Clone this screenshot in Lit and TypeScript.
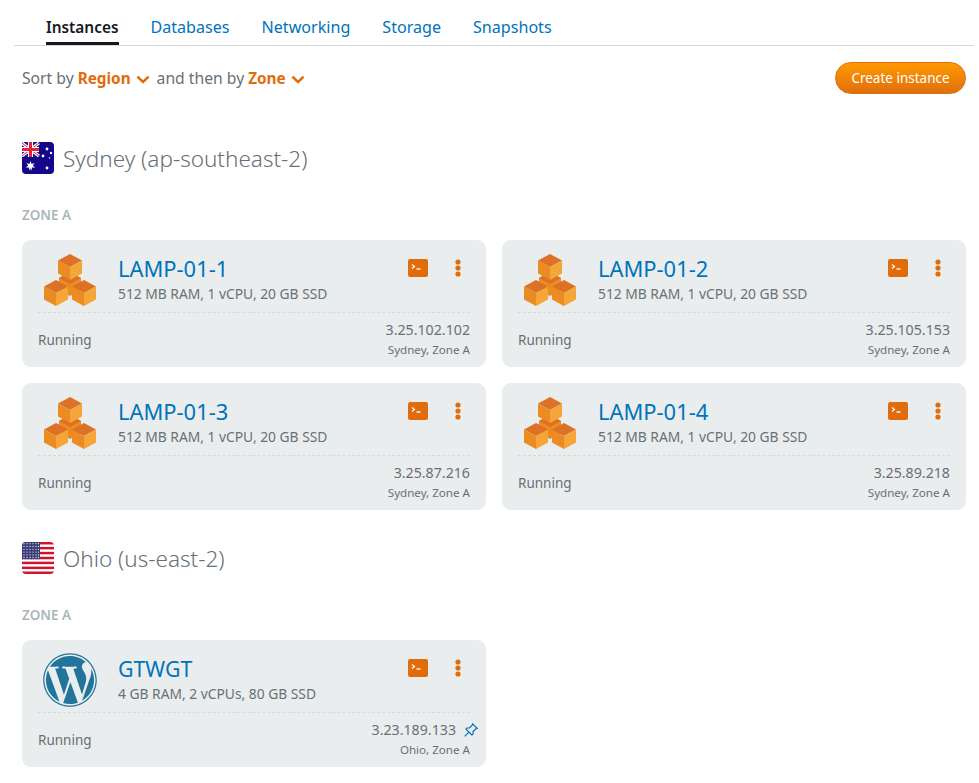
import { LitElement, html, css, svg } from 'lit';
import { customElement } from 'lit/decorators.js';

const cube = (x: number, y: number) => svg`
  <g transform="translate(${x} ${y})">
    <polygon points="12,0 24,6.5 12,13 0,6.5" fill="#dd7226" />
    <polygon points="0,6.5 12,13 12,26 0,19.5" fill="#ea8c22" />
    <polygon points="24,6.5 12,13 12,26 24,19.5" fill="#f4a63a" />
  </g>
`;

const lampIcon = html`<svg class="logo" viewBox="0 -1 54 54">
  <polygon points="16,24 27,18 38,24 38,36 27,42 16,36" fill="#ea8c22" />
  <polygon points="16,24 27,18 38,24 27,30" fill="#dd7226" />
  ${cube(15, 0)}${cube(1, 26)}${cube(29, 26)}
</svg>`;

const wordpressIcon = html`<svg class="logo" viewBox="-0.1 -0.1 24.2 24.2">
  <path
    fill="#21759b"
    d="M21.469 6.825c.84 1.537 1.318 3.3 1.318 5.175 0 3.979-2.156 7.456-5.363 9.325l3.295-9.527c.615-1.54.82-2.771.82-3.864 0-.405-.026-.78-.07-1.11m-7.981.105c.647-.03 1.232-.105 1.232-.105.582-.075.514-.93-.067-.899 0 0-1.755.135-2.88.135-1.064 0-2.85-.15-2.85-.15-.585-.03-.661.855-.075.885 0 0 .54.061 1.125.09l1.68 4.605-2.37 7.08L5.354 6.9c.649-.03 1.234-.1 1.234-.1.585-.075.516-.93-.065-.896 0 0-1.746.138-2.874.138-.2 0-.438-.008-.69-.015C4.911 3.15 8.235 1.215 12 1.215c2.809 0 5.365 1.072 7.286 2.833-.046-.003-.091-.009-.141-.009-1.06 0-1.812.923-1.812 1.914 0 .89.513 1.643 1.06 2.531.411.72.89 1.643.89 2.977 0 .915-.354 1.994-.821 3.479l-1.075 3.585-3.9-11.61.001.014zM12 22.784c-1.059 0-2.081-.153-3.048-.437l3.237-9.406 3.315 9.087c.024.053.05.101.078.149-1.12.393-2.325.609-3.582.609M1.211 12c0-1.564.336-3.05.935-4.39L7.29 21.709C3.694 19.96 1.212 16.271 1.211 12M12 0C5.385 0 0 5.385 0 12s5.385 12 12 12 12-5.385 12-12S18.615 0 12 0m0 23.449C5.69 23.449.55 18.31.55 12S5.69.55 12 .55 23.45 5.69 23.45 12 18.31 23.449 12 23.449"
  />
</svg>`;

const auFlag = html`<svg class="flag" viewBox="0 0 32 32">
  <rect width="32" height="32" rx="4" fill="#14088a" />
  <g>
    <rect x="0" y="0" width="17" height="15" rx="2" fill="#1d1a8e" />
    <path d="M0 1 L17 14 M17 1 L0 14" stroke="#fff" stroke-width="3" />
    <path d="M0 1 L17 14 M17 1 L0 14" stroke="#e0233f" stroke-width="1" />
    <path d="M8.5 0 V15 M0 7.5 H17" stroke="#fff" stroke-width="5" />
    <path d="M8.5 0 V15 M0 7.5 H17" stroke="#e0233f" stroke-width="3" />
  </g>
  <g fill="#fff">
    <polygon points="8.5,19 9.6,22 12.6,21 10.8,23.6 13.2,25.6 10,25.6 9.5,28.8 8.5,26.3 7.5,28.8 7,25.6 3.8,25.6 6.2,23.6 4.4,21 7.4,22" />
    <circle cx="25" cy="7" r="1.4" />
    <circle cx="21" cy="14" r="1.4" />
    <circle cx="29" cy="11" r="1.2" />
    <circle cx="25" cy="26" r="1.4" />
    <circle cx="27.5" cy="16" r="0.7" />
  </g>
</svg>`;

const usFlag = html`<svg class="flag" viewBox="0 0 32 32">
  <defs>
    <clipPath id="us-round"><rect width="32" height="32" rx="4" /></clipPath>
  </defs>
  <g clip-path="url(#us-round)">
    <rect width="32" height="32" fill="#fff" />
    ${[0, 1, 2, 3, 4, 5, 6].map(i => svg`<rect y="${i * 4.92}" width="32" height="2.46" fill="#d0122c" />`)}
    <rect width="18" height="17.2" fill="#3a3a76" />
    ${[1.7, 4.5, 7.3, 10.1, 12.9, 15.5].flatMap(y =>
      [2, 5, 8, 11, 14, 16.5].map(x => svg`<circle cx="${x}" cy="${y}" r="0.65" fill="#e9e9f2" />`)
    )}
  </g>
</svg>`;

const terminalIcon = html`<svg class="term" viewBox="0 0 20 18">
  <rect width="20" height="18" rx="2" fill="#e06c0c" />
  <path d="M4 5.5 L6.5 7.5 L4 9.5" fill="none" stroke="#fff" stroke-width="1.2" />
  <path d="M8.5 10 H12.5" stroke="#fff" stroke-width="1.3" />
</svg>`;

const dotsIcon = html`<svg class="dots" viewBox="0 0 6 18">
  <circle cx="3" cy="3" r="2.6" fill="#e06c0c" />
  <circle cx="3" cy="9" r="2.6" fill="#e06c0c" />
  <circle cx="3" cy="15" r="2.6" fill="#e06c0c" />
</svg>`;

const chevron = html`<svg class="chev" viewBox="0 0 14 9">
  <path d="M1.4 1.6 L7 7 L12.6 1.6" fill="none" stroke="#e06c0c" stroke-width="2.5" />
</svg>`;

const pinIcon = html`<svg class="pin" viewBox="0 0 14 14">
  <path
    d="M8.6 .8 L13.2 5.4 L11.9 5.8 L9.1 8.6 L9 11.2 L7.8 12 L2 6.2 L2.8 5 L5.4 4.9 L8.2 2.1 Z M4.6 9.4 L.7 13.3"
    fill="none"
    stroke="#0073bb"
    stroke-width="1.2"
  />
</svg>`;

interface Instance {
  name: string;
  specs: string;
  ip: string;
  place: string;
  wordpress?: boolean;
  pinned?: boolean;
}

const LAMP_SPECS = '512 MB RAM, 1 vCPU, 20 GB SSD';

const SYDNEY: Instance[] = [
  { name: 'LAMP-01-1', specs: LAMP_SPECS, ip: '3.25.102.102', place: 'Sydney, Zone A' },
  { name: 'LAMP-01-2', specs: LAMP_SPECS, ip: '3.25.105.153', place: 'Sydney, Zone A' },
  { name: 'LAMP-01-3', specs: LAMP_SPECS, ip: '3.25.87.216', place: 'Sydney, Zone A' },
  { name: 'LAMP-01-4', specs: LAMP_SPECS, ip: '3.25.89.218', place: 'Sydney, Zone A' },
];

const OHIO: Instance[] = [
  {
    name: 'GTWGT',
    specs: '4 GB RAM, 2 vCPUs, 80 GB SSD',
    ip: '3.23.189.133',
    place: 'Ohio, Zone A',
    wordpress: true,
    pinned: true,
  },
];

@customElement('app-root')
export class AppRoot extends LitElement {
  static styles = css`
    :host {
      display: block;
      font-family: "Noto Sans", "Open Sans", sans-serif;
      color: #687078;
      background: #fff;
      height: 783px;
      overflow: hidden;
    }

    .tabs {
      display: flex;
      gap: 32px;
      margin: 0 5px 0 14px;
      padding: 8px 0 0 32px;
      height: 37px;
      border-bottom: 1px solid #d5dbdb;
    }

    .tab {
      font-size: 16.1px;
      line-height: 26px;
      height: 37px;
      padding-top: 6px;
      box-sizing: border-box;
      color: #0073bb;
    }

    .tab.active {
      font-size: 15.4px;
      font-weight: 600;
      padding-top: 7px;
      color: #16191f;
      border-bottom: 3px solid #16191f;
    }

    .sort {
      display: flex;
      align-items: center;
      justify-content: space-between;
      margin: 16px 13px 0 22px;
      height: 32px;
    }

    .sort-text {
      display: flex;
      align-items: center;
      font-size: 15.7px;
    }

    .sort-text b {
      color: #e06c0c;
      font-size: 15.3px;
      font-weight: 700;
      margin-left: 4px;
    }

    .chev {
      width: 14px;
      height: 9px;
      margin: 2px 7px 0 5px;
    }

    .create {
      width: 131px;
      height: 32px;
      box-sizing: border-box;
      border: 1px solid #e0700f;
      border-radius: 16px;
      background: linear-gradient(#ff9900, #e0700f);
      color: #fff;
      font: inherit;
      font-size: 13.5px;
      padding: 0;
    }

    .region {
      margin: 48px 13px 0 22px;
    }

    .region + .region {
      margin-top: 32px;
    }

    .region-head {
      display: flex;
      align-items: center;
      gap: 9px;
      height: 32px;
      font-size: 22.5px;
      font-weight: 300;
      color: #687078;
    }

    .flag {
      width: 32px;
      height: 32px;
    }

    .zone {
      margin-top: 32px;
      height: 18px;
      line-height: 18px;
      font-size: 13.5px;
      font-weight: 600;
      color: #aab7b8;
    }

    .grid {
      display: grid;
      grid-template-columns: 464px 464px;
      gap: 16px;
      margin-top: 16px;
    }

    .card {
      height: 127px;
      box-sizing: border-box;
      background: #eaeded;
      border-radius: 9px;
      padding: 13px 16px 0;
    }

    .top {
      display: flex;
      height: 59px;
      border-bottom: 1px dashed #d5dbdb;
    }

    .logo {
      width: 54px;
      height: 54px;
      margin: 0 21px 0 5px;
      flex: none;
    }

    .info {
      flex: 1;
    }

    .name {
      font-size: 21.9px;
      line-height: 26px;
      height: 26px;
      margin-top: 3px;
      color: #0073bb;
    }

    .wp .name {
      font-size: 21.3px;
    }

    .specs {
      font-size: 13.8px;
      line-height: 20px;
      margin-top: 2px;
    }

    .actions {
      display: flex;
      gap: 27px;
      align-items: flex-start;
      padding: 6px 9px 0 0;
    }

    .term {
      width: 20px;
      height: 18px;
    }

    .dots {
      width: 6px;
      height: 18px;
    }

    .bottom {
      display: flex;
      justify-content: space-between;
      align-items: center;
      height: 53px;
    }

    .status {
      font-size: 13.5px;
    }

    .where {
      text-align: right;
    }

    .ip {
      font-size: 14.2px;
      line-height: 20px;
      position: relative;
    }

    .place {
      font-size: 11.6px;
      line-height: 20px;
    }

    .pin {
      position: absolute;
      right: -8px;
      top: 3px;
      width: 14px;
      height: 14px;
    }

    .pinned .ip {
      padding-right: 14px;
    }
  `;

  private renderCard(i: Instance) {
    return html`
      <div class="card ${i.pinned ? 'pinned' : ''} ${i.wordpress ? 'wp' : ''}">
        <div class="top">
          ${i.wordpress ? wordpressIcon : lampIcon}
          <div class="info">
            <div class="name">${i.name}</div>
            <div class="specs">${i.specs}</div>
          </div>
          <div class="actions">${terminalIcon}${dotsIcon}</div>
        </div>
        <div class="bottom">
          <div class="status">Running</div>
          <div class="where">
            <div class="ip">${i.ip}${i.pinned ? pinIcon : ''}</div>
            <div class="place">${i.place}</div>
          </div>
        </div>
      </div>
    `;
  }

  private renderRegion(flag: unknown, title: string, items: Instance[]) {
    return html`
      <section class="region">
        <div class="region-head">${flag}<span>${title}</span></div>
        <div class="zone">ZONE A</div>
        <div class="grid">${items.map(i => this.renderCard(i))}</div>
      </section>
    `;
  }

  render() {
    return html`
      <nav class="tabs">
        <div class="tab active">Instances</div>
        <div class="tab">Databases</div>
        <div class="tab">Networking</div>
        <div class="tab">Storage</div>
        <div class="tab">Snapshots</div>
      </nav>
      <div class="sort">
        <div class="sort-text">
          Sort by <b>Region</b>${chevron} and then by <b>Zone</b>${chevron}
        </div>
        <button class="create">Create instance</button>
      </div>
      ${this.renderRegion(auFlag, 'Sydney (ap-southeast-2)', SYDNEY)}
      ${this.renderRegion(usFlag, 'Ohio (us-east-2)', OHIO)}
    `;
  }
}
